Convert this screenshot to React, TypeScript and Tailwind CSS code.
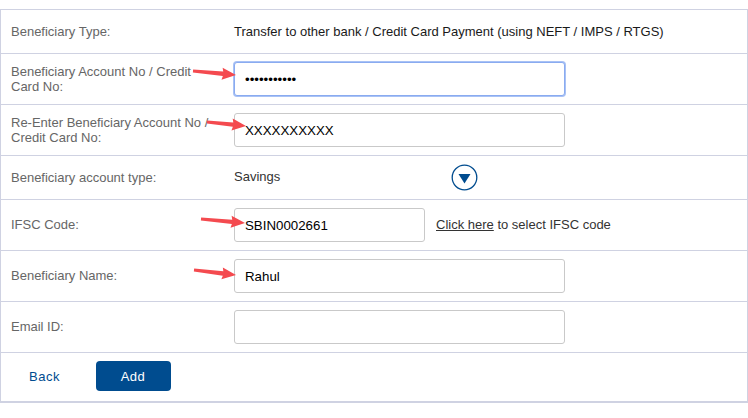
const font = { fontFamily: '"Liberation Sans", Arial, sans-serif' };

function Label({ children, up }: { children: React.ReactNode; up?: boolean }) {
  return <div className={`w-[223px] shrink-0 pl-[10px] pr-2 text-[13px] leading-[15px] text-[#666666] ${up ? "pb-[2px]" : ""}`}>{children}</div>;
}

function Input({ value, focus, type = "text", width = "w-[331px]" }: { value?: string; focus?: boolean; type?: string; width?: string }) {
  return (
    <input
      readOnly
      type={type}
      value={value ?? ""}
      className={`${width} h-[34px] rounded-[3px] border bg-white px-[10px] text-[13.3px] text-black outline-none ${
        focus ? "border-[#8aabf0] ring-1 ring-[#a9c2f5]" : "border-[#c9c9c9]"
      }`}
    />
  );
}

function Row({ h, children }: { h: string; children: React.ReactNode }) {
  return <div className={`flex items-center border-b border-[#cfd2e2] ${h}`}>{children}</div>;
}

// hand-drawn red arrows on top of the screenshot
function Arrow({ x1, y1, x2, y2 }: { x1: number; y1: number; x2: number; y2: number }) {
  const a = Math.atan2(y2 - y1, x2 - x1);
  const c = Math.cos(a);
  const s = Math.sin(a);
  const p = (d: number, o: number) => `${x1 + c * d - s * o},${y1 + s * d + c * o}`;
  const len = Math.hypot(x2 - x1, y2 - y1);
  const pts = [p(0, -1.4), p(len - 13, -2.2), p(len - 14, -6), p(len, 0), p(len - 14, 6), p(len - 13, 2.2), p(0, 1.4)];
  return <polygon points={pts.join(" ")} fill="#f44a4f" />;
}

export default function App() {
  return (
    <div className="relative h-[418px] w-[748px] overflow-hidden bg-white pt-[9px]" style={font}>
      <div className="h-[394px] border-x border-t border-b-2 border-[#cfd2e2]">
        <Row h="h-[44px]">
          <Label>Beneficiary Type:</Label>
          <div className="pl-[10px] text-[13px] text-[#1a1a1a]">Transfer to other bank / Credit Card Payment (using NEFT / IMPS / RTGS)</div>
        </Row>
        <Row h="h-[51px]">
          <Label>Beneficiary Account No / Credit Card No:</Label>
          <div className="pl-[10px]"><Input value="XXXXXXXXXXX" type="password" focus /></div>
        </Row>
        <Row h="h-[51px]">
          <Label>Re-Enter Beneficiary Account No / Credit Card No:</Label>
          <div className="pl-[10px]"><Input value="XXXXXXXXXX" /></div>
        </Row>
        <Row h="h-[44px]">
          <Label>Beneficiary account type:</Label>
          <div className="w-[227px] pl-[10px] pb-[2px] text-[13px] text-[#333333]">Savings</div>
          <svg width="27" height="27" viewBox="0 0 27 27">
            <circle cx="13.5" cy="13.5" r="12.3" fill="white" stroke="#004c8f" strokeWidth="1.3" />
            <polygon points="7.5,10 19.5,10 13.5,19.5" fill="#004c8f" />
          </svg>
        </Row>
        <Row h="h-[51px]">
          <Label up>IFSC Code:</Label>
          <div className="flex items-center pl-[10px]">
            <Input value="SBIN0002661" width="w-[191px]" />
            <div className="pl-[11px] text-[13px] text-[#333333]"><span className="underline">Click here</span> to select IFSC code</div>
          </div>
        </Row>
        <Row h="h-[51px]">
          <Label up>Beneficiary Name:</Label>
          <div className="pl-[10px]"><Input value="Rahul" /></div>
        </Row>
        <Row h="h-[51px]">
          <Label up>Email ID:</Label>
          <div className="pl-[10px]"><Input /></div>
        </Row>
        <div className="flex h-[49px] items-center pb-[3px]">
          <div className="w-[95px] pl-[28px] pt-[2px] text-[13px] tracking-[0.5px] text-[#004c8f]">Back</div>
          <button className="h-[30px] w-[75px] rounded-[4px] bg-[#004c8f] pt-[2px] pr-[1px] text-[13px] tracking-[0.5px] text-white">Add</button>
        </div>
      </div>
      <svg className="pointer-events-none absolute left-0 top-0" width="748" height="418">
        <Arrow x1={193} y1={71} x2={236} y2={75} />
        <Arrow x1={207} y1={122} x2={246} y2={126} />
        <Arrow x1={201} y1={219} x2={245} y2={223} />
        <Arrow x1={194} y1={270} x2={236} y2={275} />
      </svg>
    </div>
  );
}
